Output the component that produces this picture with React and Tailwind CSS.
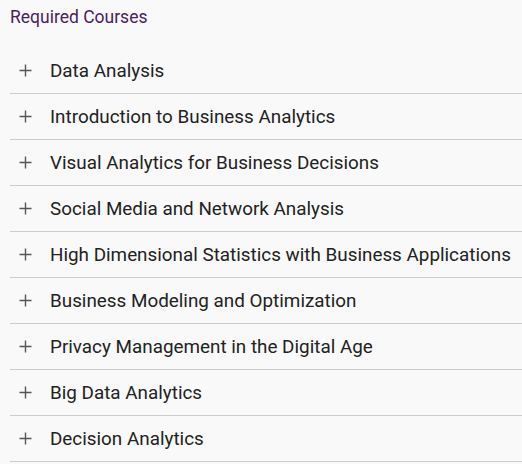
import React from 'react';

const courses = [
  'Data Analysis',
  'Introduction to Business Analytics',
  'Visual Analytics for Business Decisions',
  'Social Media and Network Analysis',
  'High Dimensional Statistics with Business Applications',
  'Business Modeling and Optimization',
  'Privacy Management in the Digital Age',
  'Big Data Analytics',
  'Decision Analytics',
];

const Plus = () => (
  <svg width="13" height="13" viewBox="0 0 13 13" className="shrink-0">
    <path d="M6.5 0.5v12M0.5 6.5h12" stroke="#555" strokeWidth="1.4" fill="none" />
  </svg>
);

const App = () => {
  return (
    <div className="min-h-screen bg-[#f9f9f9] pl-[10px]" style={{ fontFamily: 'Roboto, sans-serif' }}>
      <h2 className="pt-[4px] h-[48px] text-[17.5px] text-[#4a2260]">Required Courses</h2>
      <ul>
        {courses.map((c) => (
          <li key={c} className="flex items-center h-[46px] border-b border-[#cccccc] pl-[9px] gap-[18px]">
            <Plus />
            <span className="text-[18.85px] text-[#222] pt-[1px]">{c}</span>
          </li>
        ))}
      </ul>
    </div>
  );
};

export default App;
